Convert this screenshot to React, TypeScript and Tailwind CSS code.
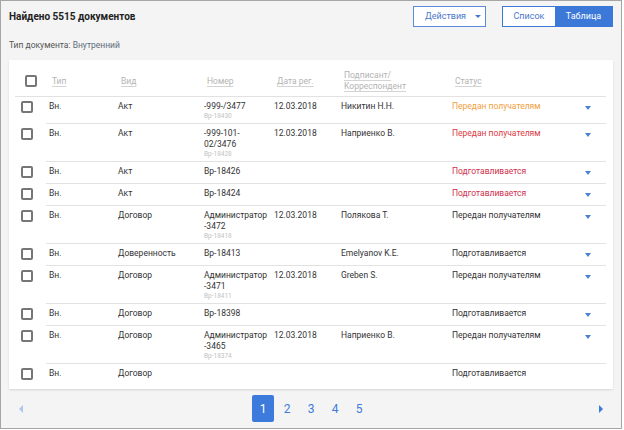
import React from "react";

type Row = {
  vid: string;
  num: string[];
  sub?: string;
  date?: string;
  person?: string;
  status: string;
  statusColor: string;
  arrow: boolean;
};

const rows: Row[] = [
  { vid: "Акт", num: ["-999-/3477"], sub: "Вр-18430", date: "12.03.2018", person: "Никитин Н.Н.", status: "Передан получателям", statusColor: "text-[#f2a03d]", arrow: true },
  { vid: "Акт", num: ["-999-101-", "02/3476"], sub: "Вр-18428", date: "12.03.2018", person: "Наприенко В.", status: "Передан получателям", statusColor: "text-[#dc3a3f]", arrow: true },
  { vid: "Акт", num: ["Вр-18426"], status: "Подготавливается", statusColor: "text-[#d0304c]", arrow: true },
  { vid: "Акт", num: ["Вр-18424"], status: "Подготавливается", statusColor: "text-[#d0304c]", arrow: true },
  { vid: "Договор", num: ["Администратор", "-3472"], sub: "Вр-18418", date: "12.03.2018", person: "Полякова Т.", status: "Передан получателям", statusColor: "text-[#333333]", arrow: true },
  { vid: "Доверенность", num: ["Вр-18413"], person: "Emelyanov K.E.", status: "Подготавливается", statusColor: "text-[#333333]", arrow: true },
  { vid: "Договор", num: ["Администратор", "-3471"], sub: "Вр-18411", date: "12.03.2018", person: "Greben S.", status: "Передан получателям", statusColor: "text-[#333333]", arrow: true },
  { vid: "Договор", num: ["Вр-18398"], status: "Подготавливается", statusColor: "text-[#333333]", arrow: true },
  { vid: "Договор", num: ["Администратор", "-3465"], sub: "Вр-18374", date: "12.03.2018", person: "Наприенко В.", status: "Передан получателям", statusColor: "text-[#333333]", arrow: true },
  { vid: "Договор", num: [], status: "Подготавливается", statusColor: "text-[#333333]", arrow: false },
];

function Checkbox() {
  return <div className="w-[12px] h-[12px] border-2 border-[#767676] rounded-[2px] bg-white" />;
}

function HeaderCell({ w, children }: { w: string; children: React.ReactNode }) {
  return (
    <div className={`${w} pl-[6px] text-[8.5px] leading-[11px] text-[#b3b3b3]`}>
      <span className="underline decoration-[#d4d4d4] underline-offset-2">{children}</span>
    </div>
  );
}

export default function App() {
  return (
    <div
      className="w-[622px] h-[429px] border border-[#a6a6a6] bg-[#f4f4f4] px-[8px] flex flex-col"
      style={{ fontFamily: "Roboto, 'Noto Sans', sans-serif" }}
    >
      {/* top bar */}
      <div className="flex items-center pt-[5px] h-[26px]">
        <div className="text-[10px] font-bold text-[#222] leading-[14px]">Найдено 5515 документов</div>
        <div className="flex-1" />
        <div className="w-[73px] h-[21px] border border-[#5b8ad8] bg-white flex items-center pl-[11px] text-[9px] text-[#4a78cc]">
          <span>Действия</span>
          <span className="ml-[9px] w-0 h-0 border-l-[3px] border-r-[3px] border-t-[3px] border-l-transparent border-r-transparent border-t-[#4a78cc]" />
        </div>
        <div className="ml-[16px] h-[21px] flex border border-[#3c78d8]">
          <div className="w-[52px] bg-white flex items-center justify-center text-[9px] text-[#4a78cc]">Список</div>
          <div className="w-[57px] bg-[#3c78d8] flex items-center justify-center text-[9px] text-white">Таблица</div>
        </div>
      </div>

      <div className="mt-[12px] text-[8.5px] leading-[12px] text-[#555]">
        Тип документа: <span className="text-[#5f6b7a]">Внутренний</span>
      </div>

      {/* card */}
      <div className="mt-[9px] bg-white shadow-[0_1px_2px_rgba(0,0,0,0.12)] pl-[6px] pr-[7px] pb-[3px]">
        {/* header */}
        <div className="flex h-[37px] pt-[6px] border-b border-[#e2e2e2] items-center">
          <div className="w-[31px] pl-[10px] flex">
            <Checkbox />
          </div>
          <HeaderCell w="w-[69px]">Тип</HeaderCell>
          <HeaderCell w="w-[86px]">Вид</HeaderCell>
          <HeaderCell w="w-[70px]">Номер</HeaderCell>
          <HeaderCell w="w-[67px]">Дата рег.</HeaderCell>
          <div className="w-[111px] pl-[6px] text-[8.5px] leading-[11px] text-[#b3b3b3]">
            <span className="underline decoration-[#d4d4d4] underline-offset-2">Подписант/</span>
            <br />
            <span className="underline decoration-[#d4d4d4] underline-offset-2">Корреспондент</span>
          </div>
          <HeaderCell w="flex-1">Статус</HeaderCell>
        </div>

        {rows.map((r, i) => (
          <div key={i} className="flex">
            <div className="w-[31px] pl-[6px] pt-[4px] pb-[6px]">
              <Checkbox />
            </div>
            <div
              className={`flex-1 flex text-[8.5px] leading-[11px] text-[#333] ${
                i < rows.length - 1 ? "border-b border-[#e2e2e2]" : ""
              }`}
            >
              <div className="w-[69px] pl-[3px] pt-[4px]">Вн.</div>
              <div className="w-[86px] pl-[3px] pt-[4px]">{r.vid}</div>
              <div className="w-[70px] pl-[3px] pt-[4px] pb-[2px]">
                {r.num.map((n, j) => (
                  <div key={j} className="whitespace-nowrap">{n}</div>
                ))}
                {r.sub && <div className="text-[6.5px] leading-[9px] text-[#c2c2c2]">{r.sub}</div>}
              </div>
              <div className="w-[67px] pl-[3px] pt-[4px]">{r.date ?? ""}</div>
              <div className="w-[111px] pl-[3px] pt-[4px]">{r.person ?? ""}</div>
              <div className={`flex-1 pl-[3px] pt-[4px] ${r.statusColor}`}>{r.status}</div>
              <div className="w-[26px] pl-[5px] pt-[9px]">
                {r.arrow && (
                  <div className="w-0 h-0 border-l-[3px] border-r-[3px] border-t-[4px] border-l-transparent border-r-transparent border-t-[#4a80d6]" />
                )}
              </div>
            </div>
          </div>
        ))}
      </div>

      {/* pagination */}
      <div className="mt-[6px] flex items-center h-[27px]">
        <div className="w-[14px] pl-[10px]">
          <div className="w-0 h-0 border-t-[4px] border-b-[4px] border-r-[4px] border-t-transparent border-b-transparent border-r-[#afc6ee]" />
        </div>
        <div className="flex-1 flex justify-center gap-[2px]">
          <div className="w-[22px] h-[27px] bg-[#3c7bdc] rounded-[2px] text-white text-[12px] flex items-center justify-center">1</div>
          {["2", "3", "4", "5"].map((p) => (
            <div key={p} className="w-[22px] h-[27px] text-[#3c7bdc] text-[12px] flex items-center justify-center">
              {p}
            </div>
          ))}
        </div>
        <div className="w-[14px] flex justify-end pr-[10px]">
          <div className="w-0 h-0 border-t-[4px] border-b-[4px] border-l-[4px] border-t-transparent border-b-transparent border-l-[#3c7bdc]" />
        </div>
      </div>
    </div>
  );
}
